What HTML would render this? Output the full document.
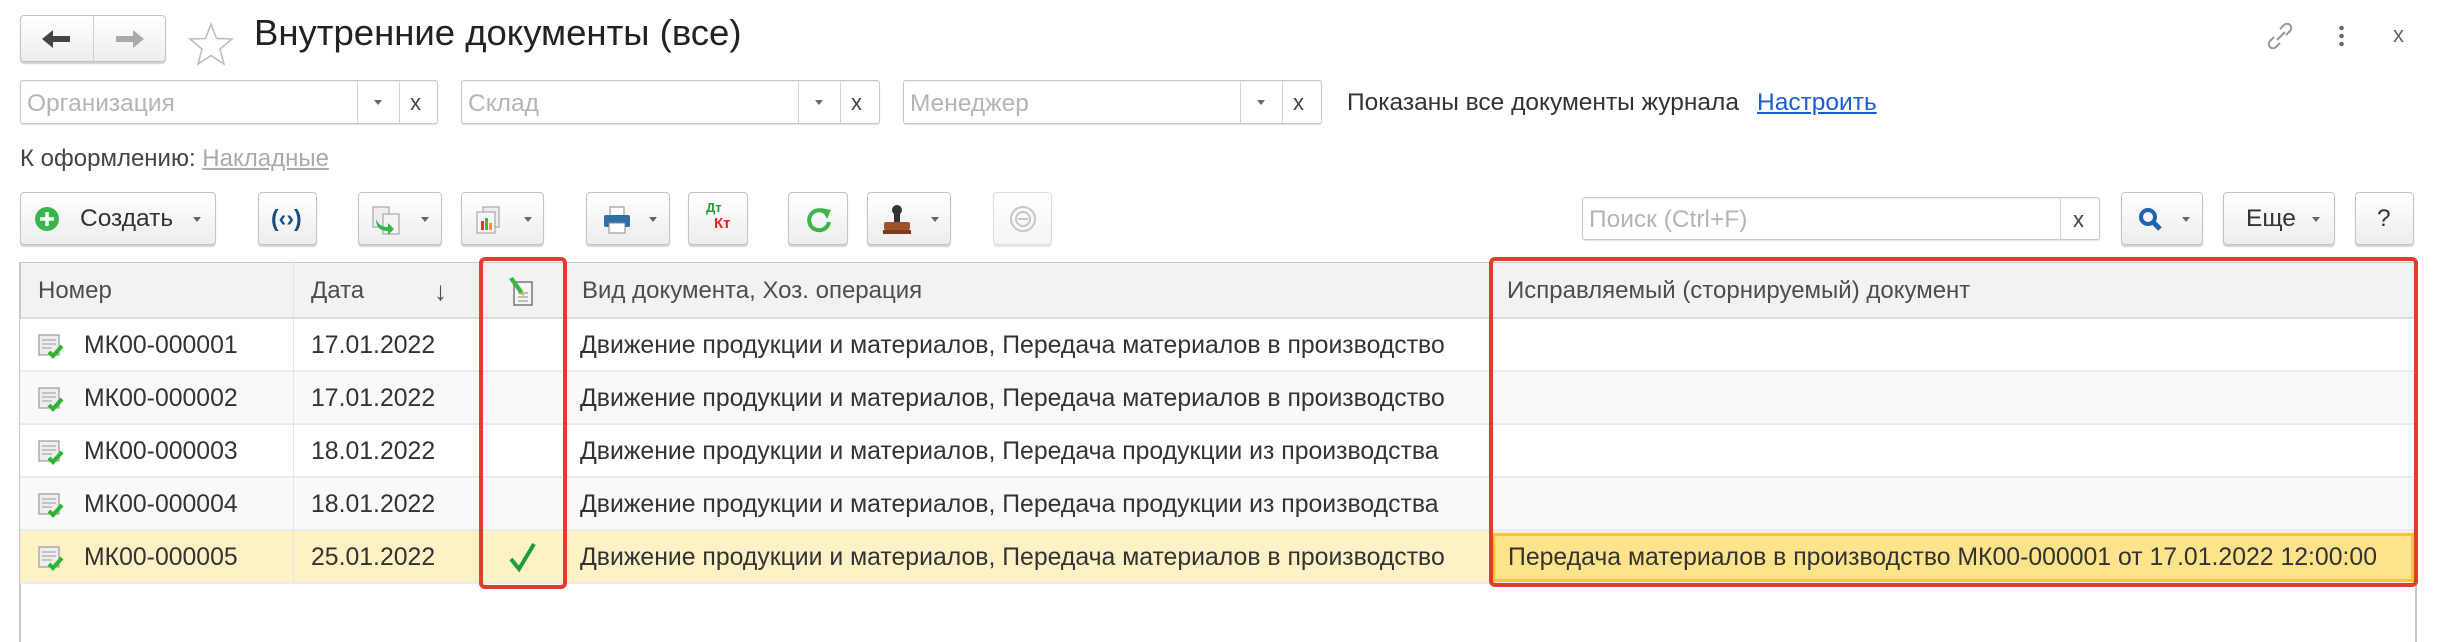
<!DOCTYPE html>
<html><head><meta charset="utf-8"><style>
*{box-sizing:border-box;margin:0;padding:0}
body{width:2437px;height:635px;background:#fff;font-family:"Liberation Sans",Arial,sans-serif;color:#333;position:relative;overflow:hidden}
.a{position:absolute}
.btn{position:absolute;border:1px solid #c4c4c4;border-radius:4px;background:linear-gradient(#fff,#ededed);box-shadow:0 2px 1px rgba(0,0,0,.18)}
.inp{position:absolute;border:1px solid #c9c9c9;border-radius:3px;background:#fff;box-shadow:inset 0 1px 1px rgba(0,0,0,.06),0 1px 1px rgba(0,0,0,.12)}
.ph{position:absolute;left:6px;top:9px;font-size:24.5px;color:#b5b5b5;white-space:nowrap}
.sep{position:absolute;top:0;bottom:0;width:1px;background:#d4d4d4}
.xx{position:absolute;font-size:22px;color:#444}
.tri{display:block;width:0;height:0;border-left:4px solid transparent;border-right:4px solid transparent;border-top:5px solid #666}
.hd{position:absolute;top:263px;height:56px;background:#f2f2f2;font-size:24px;color:#4d4d4d;line-height:56px;border-bottom:2px solid #dcdcdc;white-space:nowrap}
.row{position:absolute;left:20px;width:2396px;height:53px;border-bottom:2px solid #ebebeb}
.c{position:absolute;top:0;white-space:nowrap}
.vl{position:absolute;top:263px;width:1px;height:319px;background:#e4e4e4}
.r{position:absolute;left:0;width:2437px;height:53px;line-height:53px;font-size:24.8px;color:#333}
</style></head><body>

<div class="btn" style="left:20px;top:15px;width:146px;height:47px"></div>
<div class="a" style="left:93px;top:16px;width:1px;height:45px;background:#d0d0d0"></div>
<svg class="a" style="left:40px;top:27px" width="34" height="24"><path d="M2 12 L13 3 L13 9 L30 9 L30 15 L13 15 L13 21 Z" fill="#444"/></svg>
<svg class="a" style="left:112px;top:27px" width="34" height="24"><path d="M32 12 L21 3 L21 9 L4 9 L4 15 L21 15 L21 21 Z" fill="#aaa"/></svg>
<svg class="a" style="left:188px;top:22px" width="46" height="44"><path d="M23 2 L28.5 16.5 L44 17 L32 27 L36 42 L23 33.5 L10 42 L14 27 L2 17 L17.5 16.5 Z" fill="none" stroke="#bbb" stroke-width="1.5"/></svg>
<div class="a" style="left:254px;top:12px;font-size:36.5px;color:#222;white-space:nowrap">Внутренние документы (все)</div>
<svg class="a" style="left:2265px;top:20px" width="30" height="32"><path d="M12 20 l8-8 M15 9 l4-4 a4 4 0 0 1 6 6 l-4 4 M15 23 l-4 4 a4 4 0 0 1 -6 -6 l4 -4" fill="none" stroke="#999" stroke-width="2"/></svg>
<div class="a" style="left:2339px;top:24px;width:5px;height:24px;background:radial-gradient(circle,#666 2px,transparent 2.5px) 0 0/5px 8px"></div>
<div class="xx" style="left:2393px;top:22px;color:#666">x</div>

<div class="inp" style="left:20px;top:80px;width:418px;height:44px"><div class="ph">Организация</div><div class="sep" style="left:336px"></div><div class="sep" style="left:378px"></div><div class="a" style="left:353px;top:19px"><span class="tri"></span></div><div class="xx" style="left:389px;top:9px">x</div></div>
<div class="inp" style="left:461px;top:80px;width:419px;height:44px"><div class="ph">Склад</div><div class="sep" style="left:336px"></div><div class="sep" style="left:378px"></div><div class="a" style="left:353px;top:19px"><span class="tri"></span></div><div class="xx" style="left:389px;top:9px">x</div></div>
<div class="inp" style="left:903px;top:80px;width:419px;height:44px"><div class="ph">Менеджер</div><div class="sep" style="left:336px"></div><div class="sep" style="left:378px"></div><div class="a" style="left:353px;top:19px"><span class="tri"></span></div><div class="xx" style="left:389px;top:9px">x</div></div>
<div class="a" style="left:1347px;top:89px;font-size:24.5px;color:#333;white-space:nowrap">Показаны все документы журнала</div>
<div class="a" style="left:1757px;top:89px;font-size:24.5px;color:#1a5fd1;text-decoration:underline">Настроить</div>
<div class="a" style="left:20px;top:145px;font-size:24px;color:#444;white-space:nowrap">К оформлению: <span style="color:#aaa;text-decoration:underline">Накладные</span></div>

<div class="btn" style="left:20px;top:192px;width:196px;height:53px">
<svg class="a" style="left:13px;top:13px" width="26" height="26"><circle cx="13" cy="13" r="12" fill="#3ab54a"/><path d="M13 6v14M6 13h14" stroke="#fff" stroke-width="3.5"/></svg>
<div class="a" style="left:59px;top:12px;font-size:24.5px;color:#333">Создать</div><div class="a" style="left:172px;top:24px"><span class="tri"></span></div></div>
<div class="btn" style="left:258px;top:192px;width:59px;height:53px"><div class="a" style="left:12px;top:12px;font-size:23px;font-weight:bold;color:#1d4e7e">(‹›)</div></div>
<div class="btn" style="left:358px;top:192px;width:84px;height:53px"><svg class="a" style="left:12px;top:12px" width="34" height="30"><rect x="2" y="2" width="16" height="20" fill="#eee" stroke="#999"/><rect x="12" y="9" width="16" height="20" fill="#f4f4f4" stroke="#999"/><path d="M5 14 q3 8 12 8 l0-4 l6 6 -6 6 0-4 q-12 0-12-12z" fill="#3ab54a"/></svg><div class="a" style="left:62px;top:24px"><span class="tri"></span></div></div>
<div class="btn" style="left:461px;top:192px;width:83px;height:53px"><svg class="a" style="left:12px;top:12px" width="34" height="30"><rect x="9" y="2" width="16" height="20" fill="#eee" stroke="#999"/><rect x="3" y="7" width="18" height="21" fill="#f6f6f6" stroke="#999"/><rect x="7" y="16" width="3" height="9" fill="#e33"/><rect x="11" y="13" width="3" height="12" fill="#3ab54a"/><rect x="15" y="18" width="3" height="7" fill="#f90"/></svg><div class="a" style="left:62px;top:24px"><span class="tri"></span></div></div>
<div class="btn" style="left:586px;top:192px;width:84px;height:53px"><svg class="a" style="left:14px;top:12px" width="32" height="30"><rect x="9" y="2" width="14" height="9" fill="#fff" stroke="#888"/><rect x="3" y="10" width="26" height="12" rx="2" fill="#2f6fa8"/><rect x="8" y="18" width="16" height="10" fill="#fff" stroke="#888"/></svg><div class="a" style="left:62px;top:24px"><span class="tri"></span></div></div>
<div class="btn" style="left:688px;top:192px;width:60px;height:53px"><div class="a" style="left:17px;top:7px;font-size:13px;font-weight:bold;color:#2a9a3a">Дт</div><div class="a" style="left:25px;top:22px;font-size:15px;font-weight:bold;color:#e22">Кт</div></div>
<div class="btn" style="left:788px;top:192px;width:60px;height:53px"><svg class="a" style="left:16px;top:13px" width="28" height="28"><path d="M22 8 A10 10 0 1 0 24 16" fill="none" stroke="#3ab54a" stroke-width="4"/><path d="M16 2 L26 4 L22 13 Z" fill="#3ab54a"/></svg></div>
<div class="btn" style="left:867px;top:192px;width:84px;height:53px"><svg class="a" style="left:12px;top:10px" width="34" height="34"><circle cx="17" cy="7" r="5" fill="#333"/><rect x="14" y="10" width="6" height="10" fill="#333"/><rect x="4" y="19" width="26" height="8" rx="2" fill="#a0522d"/><rect x="3" y="27" width="28" height="4" fill="#7a3e1d"/></svg><div class="a" style="left:63px;top:24px"><span class="tri"></span></div></div>
<div class="btn" style="left:993px;top:192px;width:59px;height:53px;opacity:.55"><svg class="a" style="left:15px;top:12px" width="28" height="28"><circle cx="14" cy="14" r="12" fill="none" stroke="#999" stroke-width="2"/><circle cx="14" cy="14" r="7" fill="none" stroke="#999" stroke-width="2"/><path d="M9 14h10" stroke="#999" stroke-width="2"/></svg></div>

<div class="inp" style="left:1582px;top:197px;width:518px;height:43px"><div class="ph" style="top:8px">Поиск (Ctrl+F)</div><div class="sep" style="left:477px"></div><div class="xx" style="left:490px;top:9px">x</div></div>
<div class="btn" style="left:2121px;top:192px;width:82px;height:53px"><svg class="a" style="left:16px;top:14px" width="26" height="26"><circle cx="10" cy="10" r="7" fill="none" stroke="#1d63b0" stroke-width="4"/><path d="M15 15 L22 22" stroke="#1d63b0" stroke-width="5"/></svg><div class="a" style="left:60px;top:24px"><span class="tri"></span></div></div>
<div class="btn" style="left:2223px;top:192px;width:112px;height:53px"><div class="a" style="left:22px;top:12px;font-size:24.5px;color:#333">Еще</div><div class="a" style="left:88px;top:24px"><span class="tri"></span></div></div>
<div class="btn" style="left:2355px;top:192px;width:59px;height:53px"><div class="a" style="left:21px;top:12px;font-size:24.5px;color:#333">?</div></div>

<div class="a" style="left:19px;top:262px;width:2398px;height:380px;border:2px solid #c8c8c8;border-bottom:none"></div>
<div class="hd" style="left:21px;width:2394px"></div>
<div class="hd" style="left:38px;background:none">Номер</div>
<div class="hd" style="left:311px;background:none">Дата</div>
<div class="hd" style="left:434px;background:none;font-size:26px">↓</div>
<div class="hd" style="left:582px;background:none">Вид документа, Хоз. операция</div>
<div class="hd" style="left:1507px;background:none">Исправляемый (сторнируемый) документ</div>
<svg class="a" style="left:505px;top:275px" width="34" height="34"><rect x="9" y="7" width="18" height="23" fill="#f4f4f4" stroke="#777" stroke-width="1.5"/><path d="M13 18h10M13 22h10M13 26h10" stroke="#888"/><path d="M4 4 L8 2 L18 16 L15 19 Z" fill="#3ab54a"/><path d="M15 19 L18 16 L19 21 Z" fill="#f0a020"/></svg>

<div class="row" style="top:319px;background:#fff"></div>
<div class="row" style="top:372px;background:#f9f9f9"></div>
<div class="row" style="top:425px;background:#fff"></div>
<div class="row" style="top:478px;background:#f9f9f9"></div>
<div class="row" style="top:531px;background:#fef1c5"></div>
<div class="vl" style="left:293px"></div><div class="vl" style="left:480px"></div><div class="vl" style="left:566px"></div><div class="vl" style="left:1490px"></div>

<div class="a" style="left:1492px;top:533px;width:922px;height:49px;background:#fde38a;border:3px solid #f7c820"></div>

<div class="r" style="top:319px">
<svg class="a" style="left:37px;top:14px" width="28" height="28"><rect x="2" y="2" width="20" height="20" fill="#eee" stroke="#888"/><path d="M5 7h14M5 11h14M5 15h10" stroke="#999"/><path d="M12 19 l4 4 l9-10" fill="none" stroke="#2db52d" stroke-width="4"/></svg>
<div class="c" style="left:84px">МК00-000001</div><div class="c" style="left:311px">17.01.2022</div><div class="c" style="left:580px">Движение продукции и материалов, Передача материалов в производство</div></div>
<div class="r" style="top:372px">
<svg class="a" style="left:37px;top:14px" width="28" height="28"><rect x="2" y="2" width="20" height="20" fill="#eee" stroke="#888"/><path d="M5 7h14M5 11h14M5 15h10" stroke="#999"/><path d="M12 19 l4 4 l9-10" fill="none" stroke="#2db52d" stroke-width="4"/></svg>
<div class="c" style="left:84px">МК00-000002</div><div class="c" style="left:311px">17.01.2022</div><div class="c" style="left:580px">Движение продукции и материалов, Передача материалов в производство</div></div>
<div class="r" style="top:425px">
<svg class="a" style="left:37px;top:14px" width="28" height="28"><rect x="2" y="2" width="20" height="20" fill="#eee" stroke="#888"/><path d="M5 7h14M5 11h14M5 15h10" stroke="#999"/><path d="M12 19 l4 4 l9-10" fill="none" stroke="#2db52d" stroke-width="4"/></svg>
<div class="c" style="left:84px">МК00-000003</div><div class="c" style="left:311px">18.01.2022</div><div class="c" style="left:580px">Движение продукции и материалов, Передача продукции из производства</div></div>
<div class="r" style="top:478px">
<svg class="a" style="left:37px;top:14px" width="28" height="28"><rect x="2" y="2" width="20" height="20" fill="#eee" stroke="#888"/><path d="M5 7h14M5 11h14M5 15h10" stroke="#999"/><path d="M12 19 l4 4 l9-10" fill="none" stroke="#2db52d" stroke-width="4"/></svg>
<div class="c" style="left:84px">МК00-000004</div><div class="c" style="left:311px">18.01.2022</div><div class="c" style="left:580px">Движение продукции и материалов, Передача продукции из производства</div></div>
<div class="r" style="top:531px">
<svg class="a" style="left:37px;top:14px" width="28" height="28"><rect x="2" y="2" width="20" height="20" fill="#eee" stroke="#888"/><path d="M5 7h14M5 11h14M5 15h10" stroke="#999"/><path d="M12 19 l4 4 l9-10" fill="none" stroke="#2db52d" stroke-width="4"/></svg>
<div class="c" style="left:84px">МК00-000005</div><div class="c" style="left:311px">25.01.2022</div>
<svg class="a" style="left:508px;top:10px" width="30" height="32"><path d="M3 18 L11 28 L26 3" fill="none" stroke="#1e9e3a" stroke-width="4"/></svg>
<div class="c" style="left:580px">Движение продукции и материалов, Передача материалов в производство</div>
<div class="c" style="left:1508px">Передача материалов в производство МК00-000001 от 17.01.2022 12:00:00</div></div>

<div class="a" style="left:479px;top:257px;width:88px;height:332px;border:4px solid #e53a30;border-radius:6px"></div>
<div class="a" style="left:1489px;top:257px;width:929px;height:330px;border:4px solid #e53a30;border-radius:6px"></div>
</body></html>
